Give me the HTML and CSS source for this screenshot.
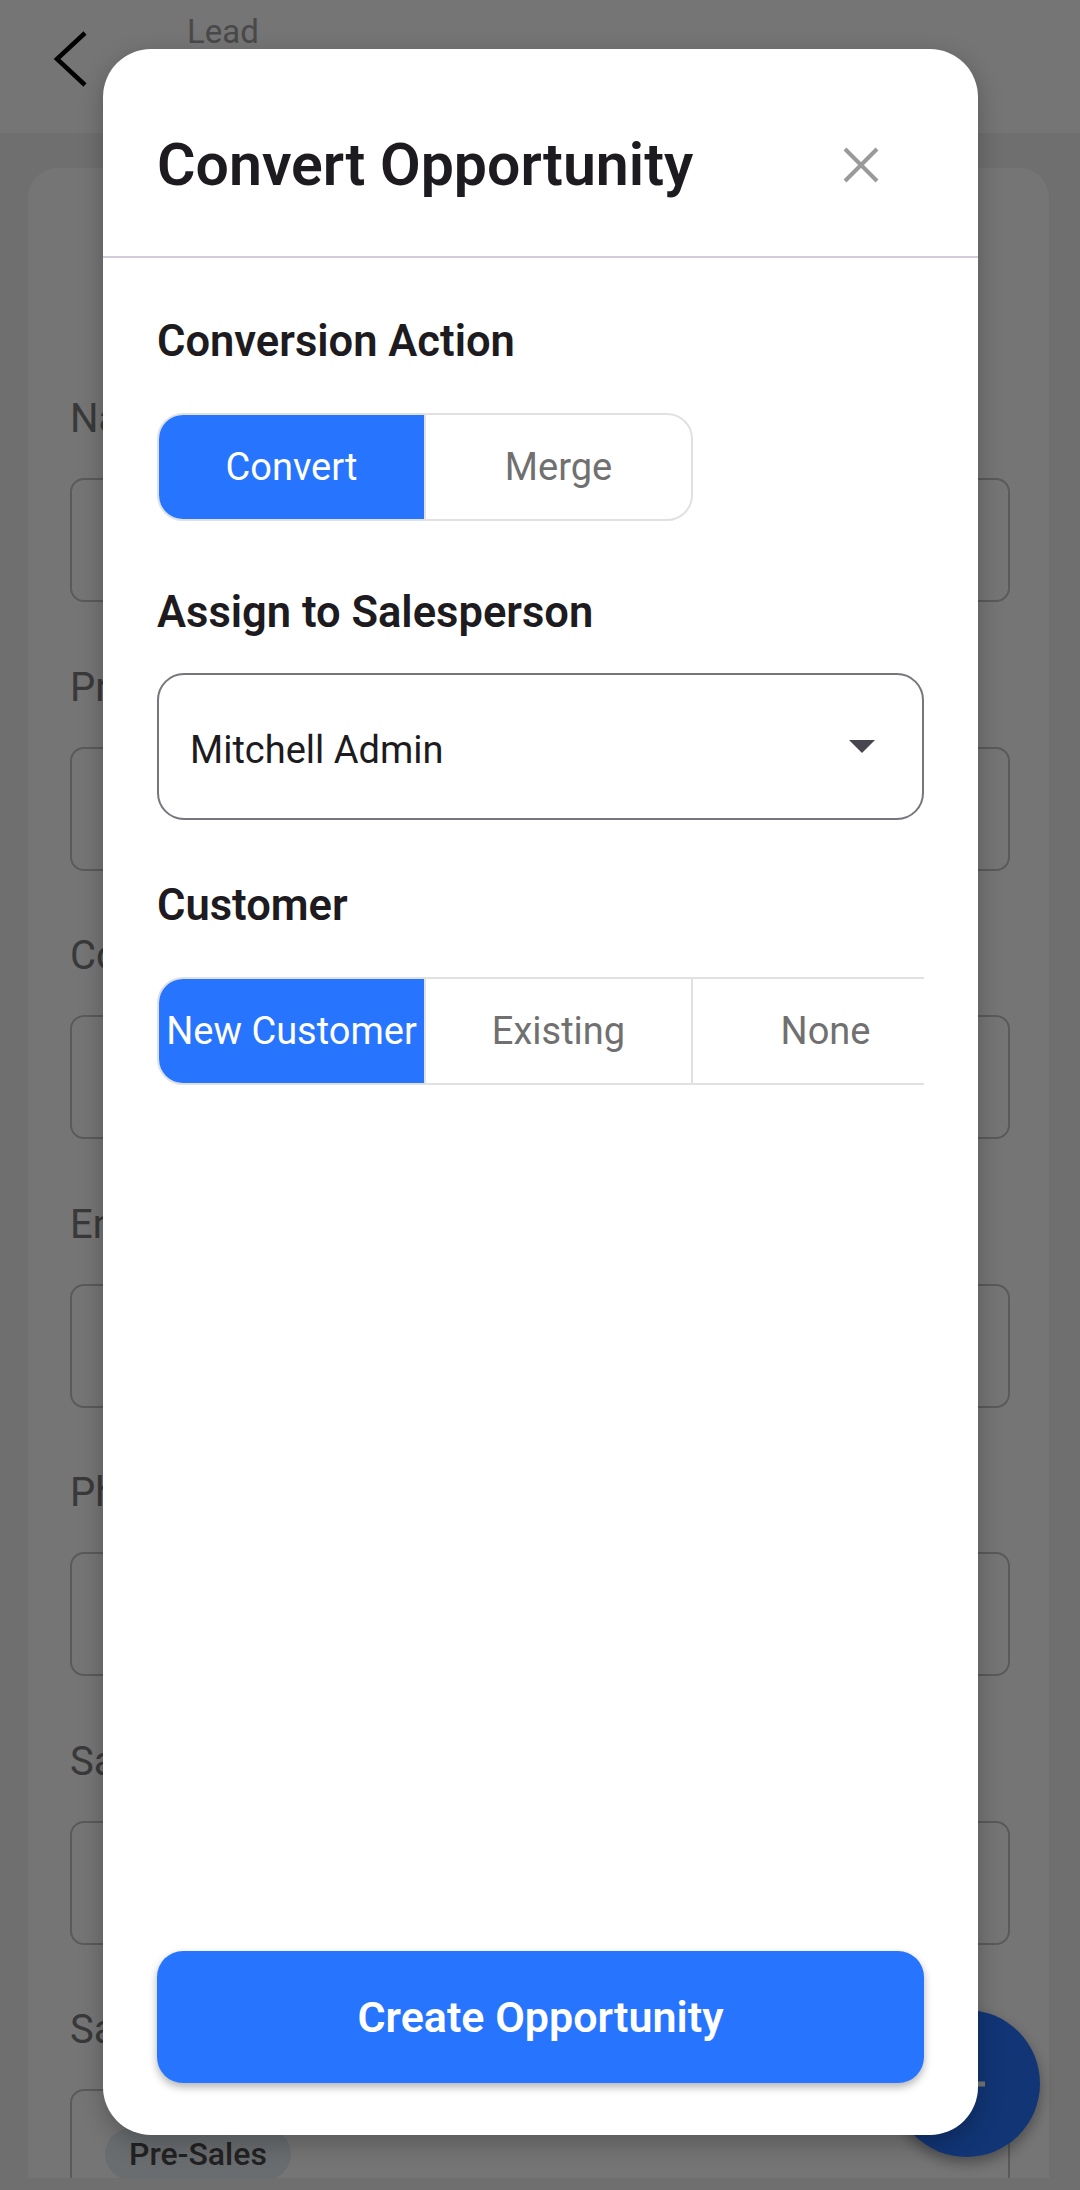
FILE: index.html
```html
<!DOCTYPE html>
<html lang="en">
<head>
<meta charset="utf-8">
<title>Convert Opportunity</title>
<link rel="stylesheet" href="styles.css">
</head>
<body>
<div class="screen">
  <header class="appbar">
    <svg class="back" width="38" height="58" viewBox="0 0 38 58"><polyline points="33,3 5,29 33,55" fill="none" stroke="#000" stroke-width="4.5"/></svg>
    <span class="crumb">Lead</span>
  </header>
  <main class="scroll">
    <section class="card">
      <div class="field"><div class="label">Name</div><div class="box"></div></div>
      <div class="field"><div class="label">Probability</div><div class="box"></div></div>
      <div class="field"><div class="label">Company</div><div class="box"></div></div>
      <div class="field"><div class="label">Email</div><div class="box"></div></div>
      <div class="field"><div class="label">Phone</div><div class="box"></div></div>
      <div class="field"><div class="label">Salesperson</div><div class="box"></div></div>
      <div class="field"><div class="label">Sales Team</div><div class="box box-tall"><span class="chip">Pre-Sales</span></div></div>
    </section>
  </main>
  <div class="fab"><svg width="48" height="48" viewBox="0 0 48 48"><path d="M24 6v36M6 24h36" stroke="#fff" stroke-width="5"/></svg></div>
  <div class="scrim"></div>

  <div class="dialog">
    <div class="dlg-header">
      <h1 class="dlg-title">Convert Opportunity</h1>
      <div class="close"><svg width="36" height="36" viewBox="0 0 36 36"><path d="M2 2L34 34M34 2L2 34" stroke="#9a9a9a" stroke-width="4"/></svg></div>
    </div>
    <div class="divider"></div>
    <div class="dlg-body">
      <section>
        <h2 class="heading">Conversion Action</h2>
        <div class="seg-wrap">
          <div class="seg">
            <div class="seg-item active">Convert</div>
            <div class="seg-item">Merge</div>
          </div>
        </div>
      </section>
      <section class="sec-2">
        <h2 class="heading">Assign to Salesperson</h2>
        <div class="dropdown">
          <span class="dd-value">Mitchell Admin</span>
          <span class="caret"></span>
        </div>
      </section>
      <section class="sec-3">
        <h2 class="heading">Customer</h2>
        <div class="seg-wrap seg-clip">
          <div class="seg seg-wide">
            <div class="seg-item active">New Customer</div>
            <div class="seg-item">Existing</div>
            <div class="seg-item">None</div>
          </div>
        </div>
      </section>
    </div>
    <div class="dlg-footer">
      <button class="primary">Create Opportunity</button>
    </div>
  </div>
</div>
</body>
</html>
```

FILE: styles.css
```css
html, body {
  margin: 0;
  padding: 0;
}
body {
  width: 1080px;
  height: 2190px;
  font-family: Roboto, "Noto Sans", sans-serif;
  overflow: hidden;
}
.screen {
  position: relative;
  width: 1080px;
  height: 2190px;
  background: #f1f1f1;
  overflow: hidden;
}
.appbar {
  height: 133px;
  background: #ffffff;
  display: flex;
  align-items: flex-start;
  padding-left: 52px;
  box-sizing: border-box;
}
.back {
  margin-top: 30px;
  flex-shrink: 0;
}
.crumb {
  margin-left: 97px;
  margin-top: 12px;
  font-size: 33px;
  line-height: 40px;
  color: #a0a0a0;
}
.scroll {
  height: 2045px;
  overflow: hidden;
}
.card {
  margin: 35px 31px 0 28px;
  padding: 226px 39px 0 42px;
  background: #ffffff;
  border-radius: 30px;
  min-height: 2100px;
}
.field .label {
  font-size: 40px;
  line-height: 50px;
  color: #7c7c7c;
  margin-bottom: 34px;
  white-space: nowrap;
}
.field .box {
  height: 124px;
  box-sizing: border-box;
  border: 2px solid #c4c4c4;
  border-radius: 14px;
  margin-bottom: 60.5px;
}
.field .box-tall {
  height: 200px;
  padding: 37px 0 0 33px;
}
.chip {
  display: inline-block;
  height: 52px;
  line-height: 52px;
  padding: 0 24px 0 24px;
  border-radius: 26px;
  background: #e6edf4;
  color: #4a4a4a;
  font-size: 32px;
  font-weight: 500;
}
.fab {
  position: absolute;
  right: 40px;
  bottom: 33px;
  width: 147px;
  height: 147px;
  border-radius: 50%;
  background: #2775ff;
  box-shadow: 0 6px 14px rgba(0, 0, 0, 0.35);
  display: flex;
  align-items: center;
  justify-content: center;
}
.scrim {
  position: absolute;
  inset: 0;
  background: rgba(0, 0, 0, 0.54);
}

/* dialog */
.dialog {
  position: absolute;
  top: 49px;
  left: 103px;
  width: 875px;
  height: 2086px;
  background: #ffffff;
  border-radius: 48px;
  display: flex;
  flex-direction: column;
  box-shadow: 0 8px 24px rgba(0, 0, 0, 0.25);
}
.dlg-header {
  height: 207px;
  box-sizing: border-box;
  padding: 24px 52px 0 54px;
  display: flex;
  align-items: center;
  justify-content: space-between;
}
.dlg-title {
  margin: 0;
  font-size: 59px;
  line-height: 70px;
  font-weight: 600;
  color: #1d1b20;
}
.close {
  width: 130px;
  height: 130px;
  display: flex;
  align-items: center;
  justify-content: center;
}
.divider {
  height: 2px;
  background: #d2ccd8;
}
.dlg-body {
  flex: 1;
  padding: 58px 54px 0;
}
.heading {
  margin: 0 0 34px;
  font-size: 43.5px;
  line-height: 52px;
  font-weight: 600;
  color: #1d1b20;
}
.sec-2 {
  margin-top: 55px;
}
.sec-3 {
  margin-top: 60px;
}
.seg-wrap {
  padding: 11px 0;
}
.seg-clip {
  overflow: hidden;
}
.seg {
  display: inline-flex;
  height: 108px;
  box-sizing: border-box;
  border: 2px solid #e1e1e1;
  border-radius: 26px;
  overflow: hidden;
}
.seg-wide {
  display: flex;
  width: 803px;
}
.seg-item {
  width: 265px;
  display: flex;
  align-items: center;
  justify-content: center;
  font-size: 38px;
  color: #707070;
  white-space: nowrap;
  flex-shrink: 0;
}
.seg-item + .seg-item {
  border-left: 2px solid #e1e1e1;
}
.seg-item.active {
  background: #2775ff;
  color: #ffffff;
}
.dropdown {
  margin-top: 9px;
  height: 147px;
  box-sizing: border-box;
  border: 2.5px solid #79747e;
  border-radius: 27px;
  padding: 0 47px 0 31px;
  display: flex;
  align-items: center;
  justify-content: space-between;
  font-size: 38px;
  color: #1d1b20;
}
.dd-value {
  padding-top: 7px;
}
.caret {
  width: 0;
  height: 0;
  border-left: 13px solid transparent;
  border-right: 13px solid transparent;
  border-top: 13px solid #49454f;
}
.dlg-footer {
  padding: 0 54px 52px;
}
.primary {
  display: block;
  width: 100%;
  height: 132px;
  border: none;
  border-radius: 26px;
  background: #2775ff;
  color: #ffffff;
  font-family: Roboto, "Noto Sans", sans-serif;
  font-size: 43px;
  font-weight: 600;
  box-shadow: 0 4px 8px rgba(0, 0, 0, 0.3);
}
```
